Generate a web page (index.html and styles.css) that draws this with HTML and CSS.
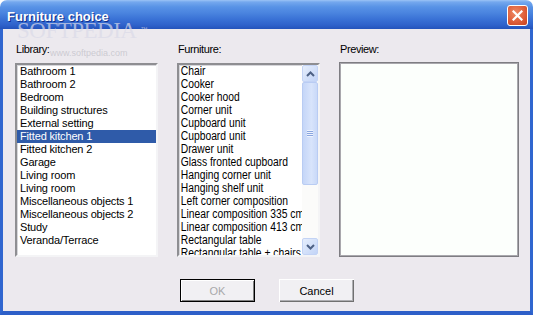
FILE: index.html
```html
<!DOCTYPE html>
<html>
<head>
<meta charset="utf-8">
<title>Furniture choice</title>
<link rel="stylesheet" href="styles.css">
</head>
<body>
<div class="window">
  <div class="titlebar">
    <span class="title">Furniture choice</span>
    <button class="close" aria-label="Close">
      <svg width="11" height="11" viewBox="0 0 11 11"><path d="M1.5 1.5 L9.5 9.5 M9.5 1.5 L1.5 9.5" stroke="#fff" stroke-width="2.2" stroke-linecap="square" fill="none"/></svg>
    </button>
  </div>
  <div class="client">
    <div class="panes">
      <div class="pane pane-library">
        <div class="label">Library:</div>
        <ul class="list library">
          <li>Bathroom 1</li>
          <li>Bathroom 2</li>
          <li>Bedroom</li>
          <li>Building structures</li>
          <li>External setting</li>
          <li class="selected">Fitted kitchen 1</li>
          <li>Fitted kitchen 2</li>
          <li>Garage</li>
          <li>Living room</li>
          <li>Living room</li>
          <li>Miscellaneous objects 1</li>
          <li>Miscellaneous objects 2</li>
          <li>Study</li>
          <li>Veranda/Terrace</li>
        </ul>
      </div>
      <div class="pane pane-furniture">
        <div class="label">Furniture:</div>
        <div class="list furniture">
          <div class="items">
            <ul class="item-list">
              <li>Chair</li>
              <li>Cooker</li>
              <li>Cooker hood</li>
              <li>Corner unit</li>
              <li>Cupboard unit</li>
              <li>Cupboard unit</li>
              <li>Drawer unit</li>
              <li>Glass fronted cupboard</li>
              <li>Hanging corner unit</li>
              <li>Hanging shelf unit</li>
              <li>Left corner composition</li>
              <li>Linear composition 335 cm</li>
              <li>Linear composition 413 cm</li>
              <li>Rectangular table</li>
              <li>Rectangular table + chairs</li>
            </ul>
          </div>
          <div class="scrollbar">
            <div class="sb-btn">
              <svg width="9" height="6" viewBox="0 0 9 6"><path d="M1 5 L4.5 1.5 L8 5" stroke="#4d6185" stroke-width="2" fill="none"/></svg>
            </div>
            <div class="sb-thumb">
              <span class="grip"></span>
            </div>
            <div class="sb-track"></div>
            <div class="sb-btn">
              <svg width="9" height="6" viewBox="0 0 9 6"><path d="M1 1 L4.5 4.5 L8 1" stroke="#4d6185" stroke-width="2" fill="none"/></svg>
            </div>
          </div>
        </div>
      </div>
      <div class="pane pane-preview">
        <div class="label">Preview:</div>
        <div class="preview"></div>
      </div>
    </div>
    <div class="buttons">
      <button class="btn default" disabled>OK</button>
      <button class="btn">Cancel</button>
    </div>
  </div>
  <div class="watermark">SOFTPEDIA<span class="tm">™</span></div>
  <div class="watermark-url">www.softpedia.com</div>
</div>
</body>
</html>
```

FILE: styles.css
```css
html, body {
  margin: 0;
  padding: 0;
  background: #ffffff;
}

.window {
  position: relative;
  width: 533px;
  height: 315px;
  display: flex;
  flex-direction: column;
  border-radius: 7px 7px 0 0;
  overflow: hidden;
  font-family: "Liberation Sans", Arial, sans-serif;
}

.titlebar {
  height: 29px;
  flex: none;
  display: flex;
  align-items: flex-start;
  justify-content: space-between;
  padding: 0 5px 0 7px;
  box-sizing: border-box;
  background: linear-gradient(to bottom, #9cc3f6 0px, #74a8ee 2px, #5892e6 7px, #4a84df 13px, #3a72d6 19px, #2f62cb 25px, #2453bb 29px);
}

.title {
  margin-top: 10px;
  font-size: 13px;
  line-height: 13px;
  font-weight: bold;
  color: #ffffff;
  text-shadow: 1px 1px 0 #0f2f8a;
  position: relative;
  z-index: 2;
}

.close {
  margin-top: 5px;
  width: 21px;
  height: 21px;
  padding: 0;
  border: 1px solid #ffffff;
  border-radius: 3px;
  background: radial-gradient(circle at 40% 35%, #ee8a66 0%, #df5f3a 55%, #c8401d 100%);
  display: flex;
  align-items: center;
  justify-content: center;
  box-sizing: border-box;
}

.client {
  flex: 1;
  background: #ece9ee;
  border-left: 3px solid #3066cf;
  border-right: 3px solid #3066cf;
  border-bottom: 4px solid #2d5fc8;
  padding: 14px 11px 0 12px;
  display: flex;
  flex-direction: column;
}

.panes {
  display: flex;
  gap: 19px;
}

.pane {
  display: flex;
  flex-direction: column;
}

.pane-library,
.pane-furniture {
  width: 143px;
}

.pane-preview {
  width: 180px;
}

.label {
  font-size: 11px;
  line-height: 13px;
  height: 13px;
  letter-spacing: -0.4px;
  margin: 0 0 7px 1px;
  color: #000;
}

.list {
  margin: 0;
  padding: 0;
  list-style: none;
  height: 194px;
  box-sizing: border-box;
  background: #ffffff;
  border: 2px solid;
  border-color: #8e8e92 #f4f4f6 #f4f4f6 #8e8e92;
  box-shadow: inset 1px 1px 0 #d6d6da;
  overflow: hidden;
}

.library li {
  font-size: 11px;
  line-height: 13px;
  height: 13px;
  letter-spacing: -0.15px;
  padding-left: 3px;
  white-space: nowrap;
  color: #000;
}

.library li.selected {
  background: #2f5ba9;
  color: #ffffff;
}

.furniture {
  display: flex;
}

.items {
  flex: 1;
  min-width: 0;
  overflow: hidden;
}

.item-list {
  margin: 0;
  padding: 0;
  list-style: none;
  width: 180px;
  transform: scaleX(0.86);
  transform-origin: 0 0;
}

.item-list li {
  font-size: 12px;
  line-height: 13px;
  height: 13px;
  padding-left: 2px;
  white-space: nowrap;
  color: #000;
}

.scrollbar {
  width: 16px;
  flex: none;
  display: flex;
  flex-direction: column;
  background: #fbfbfa;
}

.sb-btn {
  height: 17px;
  flex: none;
  box-sizing: border-box;
  border: 1px solid #c3d3f5;
  border-radius: 2px;
  background: linear-gradient(to bottom right, #e6eefc, #c2d4f7);
  display: flex;
  align-items: center;
  justify-content: center;
}

.sb-thumb {
  height: 103px;
  flex: none;
  box-sizing: border-box;
  border: 1px solid #b9ccf3;
  border-radius: 2px;
  background: linear-gradient(to right, #c5d6f8, #d8e4fb 60%, #c9d9f8);
  display: flex;
  align-items: center;
  justify-content: center;
}

.grip {
  width: 6px;
  height: 7px;
  background: repeating-linear-gradient(to bottom, #eef3fe 0 1px, #8aa6df 1px 2px);
}

.sb-track {
  flex: 1;
}

.preview {
  height: 195px;
  box-sizing: border-box;
  margin-top: -1px;
  background: #fcfffc;
  border: 1px solid #7e7d82;
  box-shadow: inset 0 0 0 1px #a9a8ad;
}

.buttons {
  display: flex;
  justify-content: center;
  gap: 24px;
  margin-top: 22px;
}

.btn {
  width: 75px;
  height: 23px;
  padding: 0;
  border: none;
  background: #f1f0f3;
  font-family: "Liberation Sans", Arial, sans-serif;
  font-size: 11px;
  color: #000;
  box-shadow: inset 1px 1px 0 #ffffff, inset -1px -1px 0 #707070, inset -2px -2px 0 #aeaeb2;
}

.btn.default {
  color: #a8a8aa;
  box-shadow: inset 0 0 0 1px #000000, inset 2px 2px 0 #ffffff, inset -2px -2px 0 #808080;
}

.watermark {
  position: absolute;
  left: 17px;
  top: 19px;
  z-index: 1;
  font-family: "Liberation Serif", serif;
  font-size: 23px;
  line-height: 23px;
  letter-spacing: -0.5px;
  color: rgba(218, 218, 232, 0.7);
  pointer-events: none;
}

.watermark .tm {
  font-family: "Liberation Sans", sans-serif;
  font-size: 7px;
  vertical-align: top;
  margin-left: 4px;
  position: relative;
  top: -1px;
}

.watermark-url {
  position: absolute;
  left: 50px;
  top: 48px;
  font-family: "Liberation Sans", sans-serif;
  font-size: 9px;
  color: rgba(170, 170, 180, 0.5);
  pointer-events: none;
}
```
